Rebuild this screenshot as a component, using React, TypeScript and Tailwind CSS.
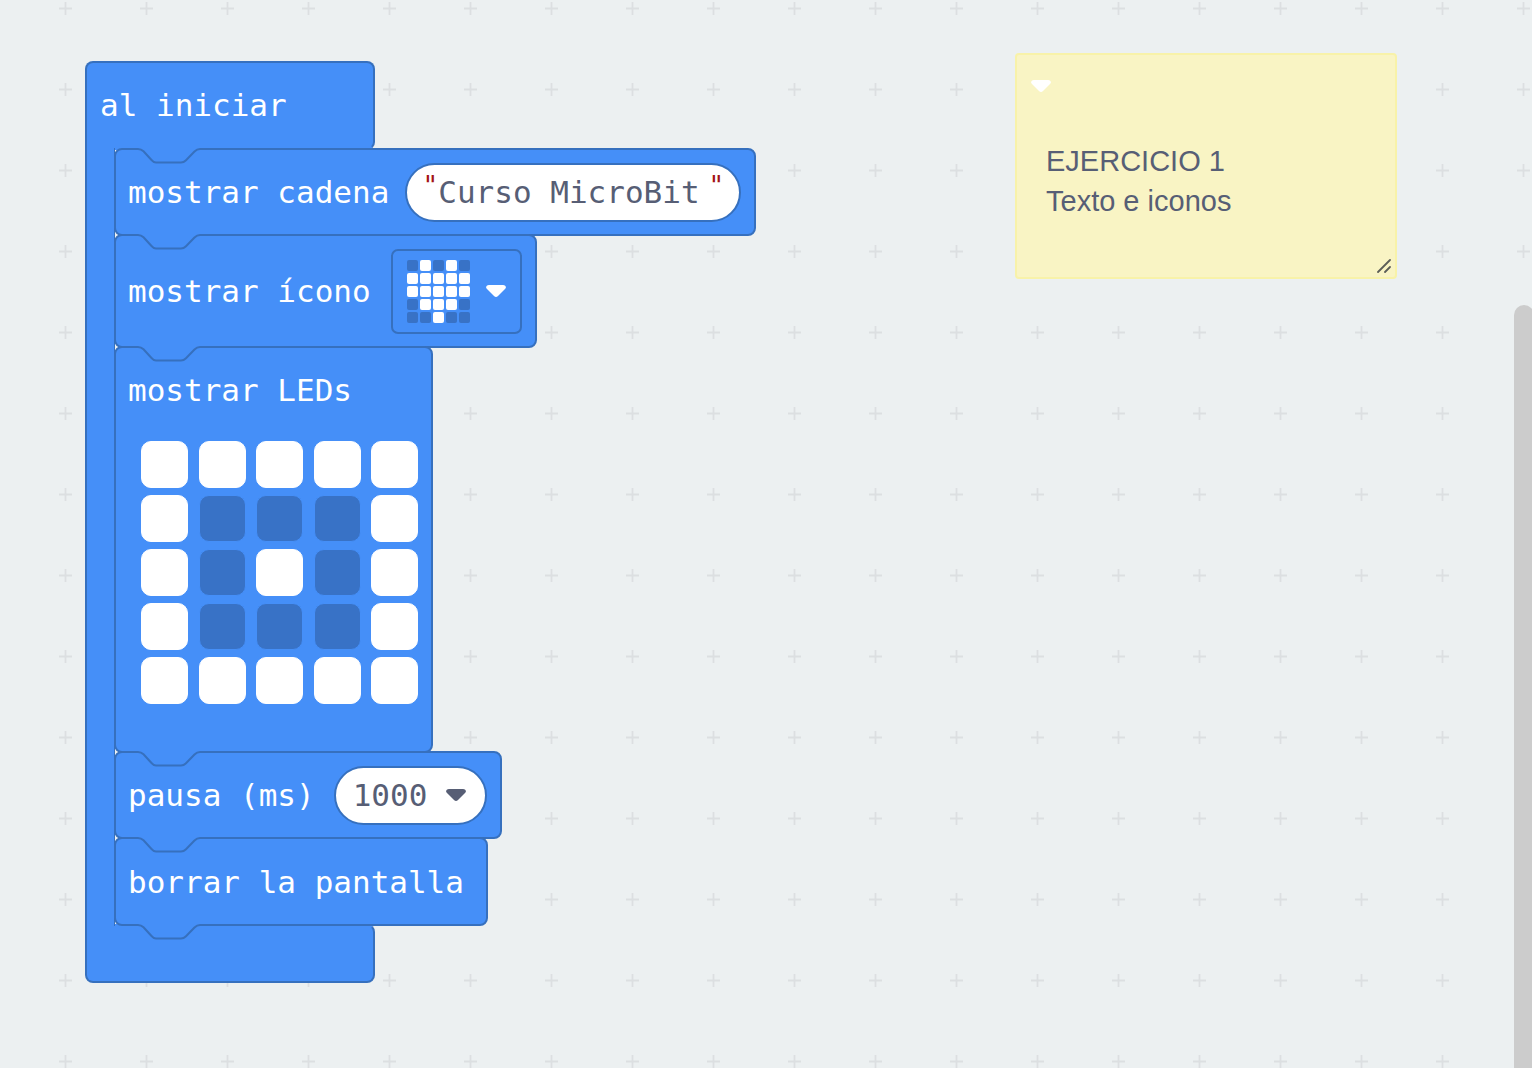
import { useState, type ReactNode } from "react";

const HEART = ["01010", "11111", "11111", "01110", "00100"];
const LEDS = ["11111", "10001", "10101", "10001", "11111"];

function Notch() {
  return (
    <svg className="block h-4 w-16" viewBox="0 0 64 16" fill="none" aria-hidden="true">
      <path d="M0 0V1C2.500 1 4 1.800 5.500 3.300L13.500 12C15 13.700 16 14.500 18 14.500H43C45.500 14.500 46.500 13.700 48 12.200L56.500 3.500C58.500 1.500 59.500 1 62 1V0Z" fill="#458ff8" />
      <path d="M-1 1H0C2.500 1 4 1.800 5.500 3.300L13.500 12C15 13.700 16 14.500 18 14.500H43C45.500 14.500 46.500 13.700 48 12.200L56.500 3.500C58.500 1.500 59.500 1 62 1H64" stroke="#3670be" strokeWidth="2" />
    </svg>
  );
}

function Block({ children, className, last = false }: { children: ReactNode; className: string; last?: boolean }) {
  return (
    <div className={`relative flex w-fit rounded-[8px] border-2 border-[#3670be] bg-[#458ff8] pl-3 ${className}`}>
      <div className="absolute -top-[2px] left-[22px]">
        <Notch />
      </div>
      {children}
      {last && (
        <div className="absolute top-full left-[22px]">
          <Notch />
        </div>
      )}
    </div>
  );
}

function Arrow({ className }: { className: string }) {
  return (
    <svg className={`block h-3 w-5 ${className}`} viewBox="0 0 20 12" aria-hidden="true">
      <path d="M3 0H17C20 0 20.500 2.500 19 4L12 11Q10 13 8 11L1 4C-.5 2.500 0 0 3 0Z" fill="currentColor" />
    </svg>
  );
}

function LedMatrix() {
  const [leds, setLeds] = useState(LEDS.map((row) => row.split("").map((c) => c === "1")));
  const toggle = (r: number, c: number) =>
    setLeds(leds.map((row, y) => row.map((on, x) => (y === r && x === c ? !on : on))));
  return (
    <div className="mt-[9px] ml-[13px] flex w-[277px] flex-col gap-[7px]">
      {leds.map((row, r) => (
        <div key={r} className="flex justify-between">
          {row.map((on, c) => (
            <input
              key={c}
              type="checkbox"
              aria-label={`LED ${r + 1}, ${c + 1}`}
              checked={on}
              onChange={() => toggle(r, c)}
              className="size-[47px] appearance-none rounded-[10px] border border-[#458ff8] bg-[#3872c6] checked:border-white checked:bg-white"
            />
          ))}
        </div>
      ))}
    </div>
  );
}

export default function App() {
  return (
    <main className="relative h-screen min-h-[1068px] w-full overflow-hidden bg-[#ecf0f1] font-['DejaVu_Sans_Mono',monospace] text-[31px] leading-[36px] text-white">
      <svg className="absolute inset-0 h-full w-full" aria-hidden="true">
        <defs>
          <pattern id="grid" x="25" y="-32" width="81" height="81" patternUnits="userSpaceOnUse">
            <path d="M34 40.500H47M40.500 34V47" stroke="#dcdfe1" strokeWidth="1.800" />
          </pattern>
        </defs>
        <rect width="100%" height="100%" fill="url(#grid)" />
      </svg>

      <section className="absolute top-[61px] left-[85px] flex flex-col whitespace-pre" aria-label="al iniciar">
        <div className="flex h-[89px] w-[290px] items-center rounded-[8px] rounded-bl-none border-2 border-[#3670be] border-b-transparent bg-[#458ff8] pb-[2px] pl-[13px]">
          al iniciar
        </div>
        <div className="relative z-10 -mt-[2px] flex">
          <div className="-mr-px w-[30px] border-r border-l-2 border-r-[#3670be] border-l-[#3670be] bg-[#458ff8]" />
          <div className="flex flex-col">
            <Block className="h-[88px] items-center gap-4 pr-[13px]">
              <label htmlFor="cadena">mostrar cadena</label>
              <div className="flex h-[59px] items-center rounded-full border-2 border-[#3670be] bg-white px-[15px] text-[#575e75]">
                <span className="mt-[7px] w-4 self-start text-center text-[26px] leading-[28px] text-[#a31515]">"</span>
                <input id="cadena" defaultValue="Curso MicroBit " className="w-[270px] bg-transparent outline-none" />
                <span className="mt-[7px] w-4 self-start text-center text-[26px] leading-[28px] text-[#a31515]">"</span>
              </div>
            </Block>

            <Block className="-mt-[2px] h-[114px] items-center gap-5 pr-[13px]">
              <span>mostrar ícono</span>
              <button
                type="button"
                aria-label="Elegir ícono"
                className="flex h-[85px] w-[131px] items-center justify-between rounded-[7px] border-2 border-[#3670be] pr-[14px] pl-[14px]"
              >
                <span className="grid grid-cols-5 gap-[2px]">
                  {HEART.join("").split("").map((c, i) => (
                    <span
                      key={i}
                      className={c === "1" ? "size-[11px] rounded-[2px] bg-white" : "size-[11px] rounded-[2px] bg-[#3872c6]"}
                    />
                  ))}
                </span>
                <Arrow className="text-white" />
              </button>
            </Block>

            <Block className="-mt-[2px] flex-col pr-[13px] pb-[47px]">
              <span className="flex h-[84px] items-center">mostrar LEDs</span>
              <LedMatrix />
            </Block>

            <Block className="-mt-[2px] h-[88px] items-center gap-[19px] pr-[13px]">
              <label htmlFor="pausa">pausa (ms)</label>
              <div className="flex h-[59px] w-[153px] items-center justify-between rounded-full border-2 border-[#3670be] bg-white pr-[19px] pl-[17px] text-[#575e75]">
                <input id="pausa" defaultValue="1000" className="w-20 bg-transparent outline-none" />
                <button type="button" aria-label="Elegir duración">
                  <Arrow className="text-[#575e75]" />
                </button>
              </div>
            </Block>

            <Block last className="-mt-[2px] h-[89px] items-center pr-[22px]">
              borrar la pantalla
            </Block>
          </div>
        </div>
        <div className="-mt-[2px] h-[59px] w-[290px] rounded-[8px] rounded-tl-none border-2 border-[#3670be] border-t-transparent bg-[#458ff8]" />
      </section>

      <aside className="absolute top-[53px] left-[1015px] flex h-[226px] w-[382px] flex-col rounded-[4px] border-2 border-[#f8f2a9] bg-[#f9f4c4] font-['Liberation_Sans',sans-serif] text-[29px] leading-[40px] text-[#575e75]">
        <button type="button" aria-label="Contraer nota" className="mt-[25px] ml-[14px] w-5">
          <Arrow className="text-white" />
        </button>
        <textarea
          aria-label="Nota"
          defaultValue={"EJERCICIO 1\nTexto e iconos"}
          className="mx-[29px] mt-[49px] h-20 resize-none overflow-hidden bg-transparent outline-none"
        />
        <svg className="mt-auto mr-1 mb-1 size-[14px] self-end" viewBox="0 0 14 14" fill="none" aria-hidden="true">
          <path d="M1 13L13 1M8 13L13 8" stroke="#5c5e58" strokeWidth="1.800" strokeLinecap="round" />
        </svg>
      </aside>

      <div className="absolute top-[305px] -right-[2px] bottom-0 w-5 rounded-t-full bg-[#cccccc]" />
    </main>
  );
}
